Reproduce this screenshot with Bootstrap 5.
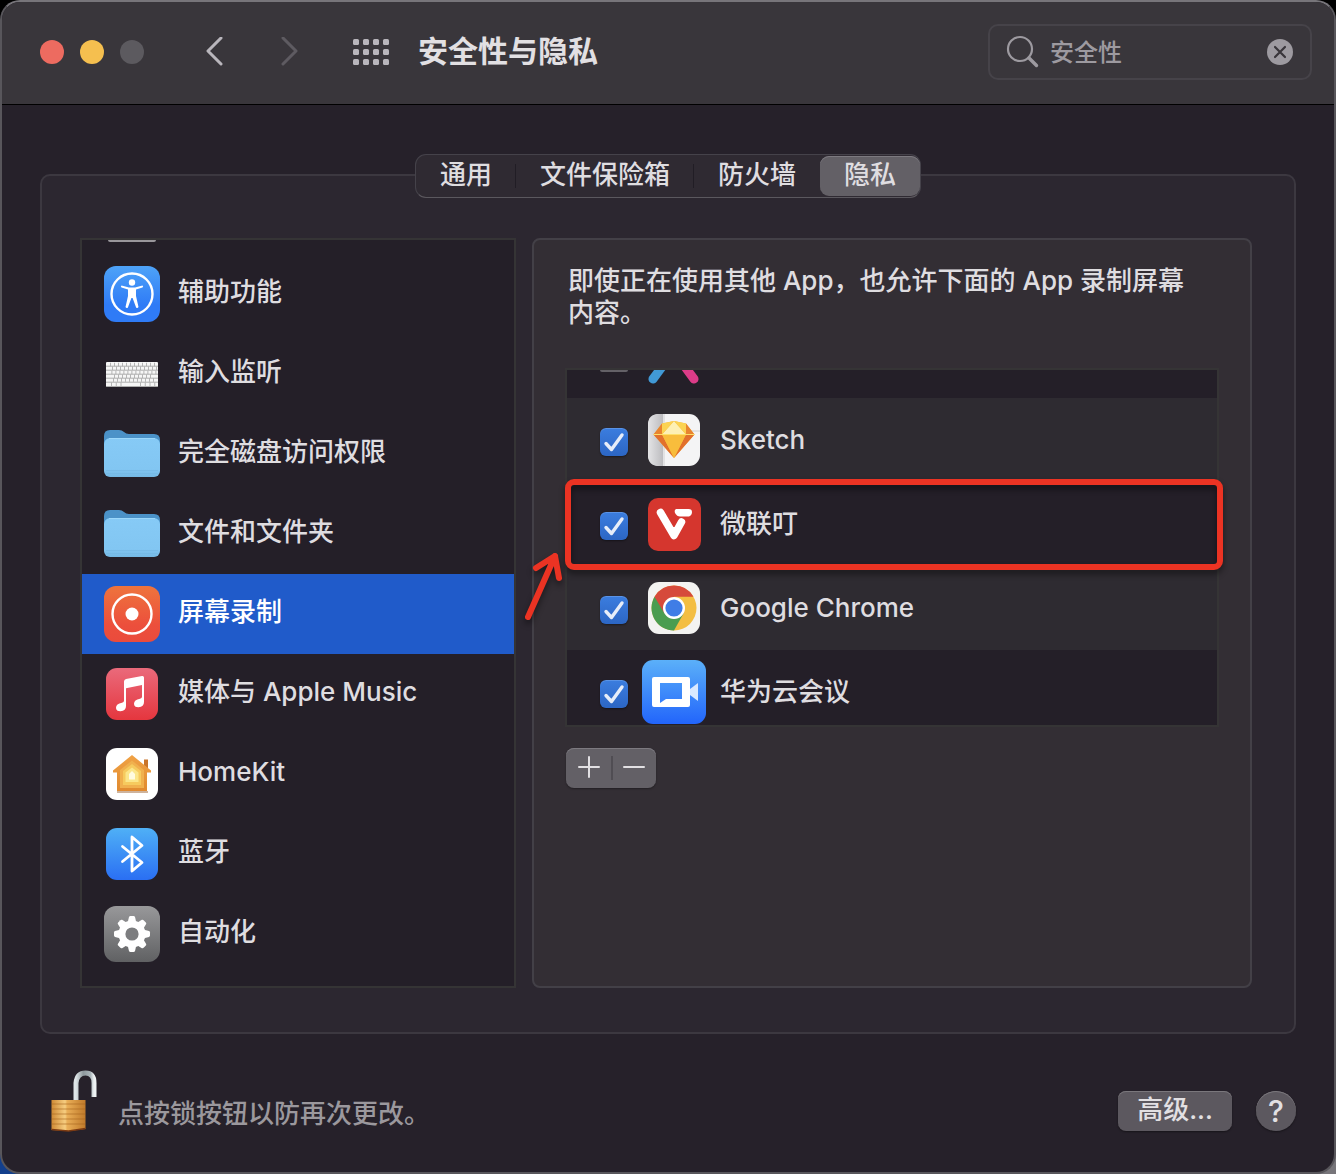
<!DOCTYPE html>
<html lang="zh-CN">
<head>
<meta charset="utf-8">
<meta name="viewport" content="width=device-width, initial-scale=1">
<title>安全性与隐私</title>
<link href="https://cdn.jsdelivr.net/npm/bootstrap@5.3.0/dist/css/bootstrap.min.css" rel="stylesheet">
<style>
  body {
    background: linear-gradient(90deg, #123f8c 0 40px, #000 40px 1290px, #77757a 1290px) bottom / 100% 30px no-repeat #000;
    font-family: Inter, "Noto Sans CJK SC", sans-serif;
    font-size: 26px;
    font-weight: 500;
    line-height: 32px;
    color: #dfdde0;
  }
  .prefs-window {
    min-height: 100vh;
    background: #26212a;
    border: 2px solid #58565b;
    border-top-color: #77757a;
    border-radius: 20px;
    overflow: hidden;
  }
  .title-bar { background: #39363b; border-bottom: 1px solid #000; padding: 22px 22px 24px 38px; }
  .light { width: 24px; height: 24px; border: 0; border-radius: 50%; padding: 0; }
  .light-close { background: #ed6b60; }
  .light-min { background: #f5bf4f; }
  .light-zoom { background: #5c5a5f; }
  .bare { background: none; border: 0; padding: 0; color: #b9b6bc; line-height: 1; display: flex; }
  .bare:disabled { color: #5e5b61; }
  .history { margin-left: 60px; gap: 53px; }
  .grid-btn { margin-left: 52px; }
  .win-title { font-size: 30px; line-height: 38px; font-weight: 700; margin: 0 0 2px 29px; color: #e2e0e3; }
  .search-box { width: 324px; height: 56px; border: 2px solid #464349; border-radius: 10px; padding: 0 17px 0 16px; gap: 10px; color: #9d9aa0; }
  .search-box input { min-width: 0; background: none; border: 0; outline: 0; color: inherit; font-size: 24px; font-weight: inherit; line-height: 32px; padding: 2px 0 0; }
  .search-box input::-webkit-search-cancel-button { display: none; }
  .content { padding: 49px 38px 40px; }
  .tab-strip { background: #2f2a32; border: 1px solid #45424a; border-bottom-color: #5b585e; border-radius: 11px; position: relative; z-index: 1; margin-bottom: -24px; }
  .tab-strip button { background: none; border: 0; color: inherit; font-weight: inherit; padding: 3px 24px 5px; margin: 1px 0; position: relative; }
  .tab-strip button.split::after { content: ""; position: absolute; right: 0; top: 8px; bottom: 8px; width: 1px; background: #211d25; }
  .tab-strip button.active { background: #636066; border-radius: 9px; box-shadow: inset 0 1px #7d7a80; }
  .tab-panel { background: #2c2730; border: 2px solid #3c3840; border-radius: 10px; padding: 62px 42px 44px 38px; gap: 16px; }
  .side-list { width: 436px; flex: none; background: #241f28; border: 2px solid #353435; padding-bottom: 12px; }
  .side-peek { height: 14px; padding-left: 26px; overflow: hidden; }
  .side-peek i { display: block; width: 48px; height: 2px; border-radius: 0 0 10px 10px; background: #99969b; }
  .side-item { display: flex; align-items: center; gap: 18px; height: 80px; padding-left: 22px; color: #dfdde0; text-decoration: none; }
  .side-item span { padding-bottom: 4px; }
  .side-item.current { background: #205bca; color: #fff; }
  .detail { background: #332e34; border: 2px solid #434047; border-radius: 8px; padding: 25px 31px 32px; }
  .detail-note { margin: 0 35px 39px 3px; }
  .app-wrap { position: relative; }
  .app-list { border: 2px solid #353435; overflow: hidden; background: #241f28; }
  .app-peek { height: 28px; padding-left: 33px; gap: 16px; overflow: hidden; }
  .app-peek i { width: 28px; height: 2px; border-radius: 0 0 8px 8px; background: #646167; }
  .app-row { display: flex; align-items: center; height: 84px; padding-left: 33px; gap: 14px; }
  .app-row.alt { background: #2e2b31; }
  .app-row svg { flex: none; }
  .app-row .form-check-input { width: 28px; height: 28px; margin: 4px 0 0; border-radius: 6px; border: 0; flex: none; }
  .app-row .form-check-input:checked {
    background: url("data:image/svg+xml,%3Csvg xmlns='http://www.w3.org/2000/svg' viewBox='0 0 28 28'%3E%3Cpath d='M6 15.500 11.500 21.500 22 7' fill='none' stroke='%23e6edf9' stroke-width='3.400' stroke-linecap='round' stroke-linejoin='round'/%3E%3C/svg%3E") center / 28px, linear-gradient(#3b7ddf, #2c66c4);
    box-shadow: inset 0 1px #5a93e6, 0 1px 2px #0006;
  }
  .app-row.last { height: 75px; padding-top: 8px; }
  .mark-box { position: absolute; left: 0; right: -4px; top: 111px; height: 91px; border: 6px solid #eb3323; border-radius: 9px; filter: drop-shadow(0 4px 3px #0007); pointer-events: none; }
  .mark-arrow { position: absolute; left: -45px; top: 180px; filter: drop-shadow(0 4px 3px #0007); pointer-events: none; }
  .add-remove { margin: 21px 0 0 1px; background: #636066; border-radius: 8px; box-shadow: inset 0 1px #7d7a80, 0 1px 2px #0005; }
  .add-remove button { background: none; border: 0; padding: 0 0 2px; width: 45px; height: 40px; color: #e2e0e3; line-height: 1; }
  .add-remove button + button { position: relative; }
  .add-remove button + button::before { content: ""; position: absolute; left: 0; top: 8px; width: 2px; height: 24px; background: #504d53; }
  .foot { padding: 34px 0 0 10px; }
  .foot-note { color: #9b989d; margin: 28px 0 0 20px; }
  .foot-actions { padding-top: 21px; }
  .push { background: #5c585f; color: #e2e0e3; border: 0; height: 40px; box-shadow: inset 0 1px #7a777c, 0 1px 2px #0006; padding: 0; font-weight: inherit; }
  .push-wide { width: 114px; border-radius: 8px; padding-bottom: 2px; }
  .push-round { width: 40px; border-radius: 50%; font-size: 30px; }
</style>
</head>
<body>
<svg width="0" height="0" class="position-absolute" aria-hidden="true">
  <defs>
    <linearGradient id="gBlue" x2="0" y2="1"><stop stop-color="#4ea3f8"/><stop offset=".7" stop-color="#2f7bf6"/><stop offset="1" stop-color="#2f7bf6"/></linearGradient>
    <linearGradient id="gBt" x2="0" y2="1"><stop stop-color="#4fb0f6"/><stop offset="1" stop-color="#2a6ff3"/></linearGradient>
    <linearGradient id="gRec" x2="0" y2="1"><stop stop-color="#ee743d"/><stop offset=".7" stop-color="#ec4f3c"/><stop offset="1" stop-color="#ea4b3c"/></linearGradient>
    <linearGradient id="gMusic" x2="0" y2="1"><stop stop-color="#ea6a7b"/><stop offset="1" stop-color="#e5363e"/></linearGradient>
    <linearGradient id="gGear" x2="0" y2="1"><stop stop-color="#98989a"/><stop offset="1" stop-color="#606163"/></linearGradient>
    <linearGradient id="gFold" x2="0" y2="1"><stop stop-color="#86caf6"/><stop offset=".8" stop-color="#82c6f2"/><stop offset="1" stop-color="#75b9e5"/></linearGradient>
    <linearGradient id="gVid" x2="0" y2="1"><stop stop-color="#5bb0f9"/><stop offset="1" stop-color="#2265fb"/></linearGradient>
    <linearGradient id="gHouse" x2="0" y2="1"><stop stop-color="#f0a245"/><stop offset="1" stop-color="#e08a30"/></linearGradient>
    <linearGradient id="gSk" x2="1" y2="0"><stop stop-color="#e4e4e6"/><stop offset="1" stop-color="#bcbcbf"/></linearGradient>
    <linearGradient id="gLock"><stop stop-color="#cf8a35"/><stop offset=".4" stop-color="#f6cd80"/><stop offset=".46" stop-color="#e9ae57"/><stop offset="1" stop-color="#c07a2a"/></linearGradient>
    <linearGradient id="gShackle"><stop stop-color="#dfe6e8"/><stop offset=".4" stop-color="#8d989c"/><stop offset=".8" stop-color="#a9b4b8"/><stop offset="1" stop-color="#eef2f3"/></linearGradient>
    <symbol id="folder" viewBox="0 0 56 56">
      <path d="M0 19V10q0-6 6-6h9q3 0 5 2t5 2h25q6 0 6 6v8H0z" fill="#4b92c8"/>
      <path d="M0 22v-4q0-6 6-6h44q6 0 6 6v4z" fill="#3f83ba"/>
      <rect y="12" width="56" height="39" rx="6" fill="url(#gFold)"/>
      <path d="M5 12.500h46" stroke="#9bd8fb"/><path d="M2 44.500h52M2 47.500h52" stroke="#74b8e4" stroke-width=".7"/>
    </symbol>
  </defs>
</svg>

<div class="prefs-window">
  <header class="title-bar d-flex align-items-center">
    <div class="d-flex gap-3">
      <button class="light light-close" aria-label="关闭"></button>
      <button class="light light-min" aria-label="最小化"></button>
      <button class="light light-zoom" aria-label="缩放"></button>
    </div>
    <div class="history d-flex">
      <button class="bare" aria-label="后退"><svg width="22" height="30" viewBox="0 0 22 30"><path d="M17 1 4 14l13 13" fill="none" stroke="currentColor" stroke-width="3" stroke-linecap="round" stroke-linejoin="round"/></svg></button>
      <button class="bare" aria-label="前进" disabled><svg width="22" height="30" viewBox="0 0 22 30"><path d="M4 1l13 13L4 27" fill="none" stroke="currentColor" stroke-width="3" stroke-linecap="round" stroke-linejoin="round"/></svg></button>
    </div>
    <button class="bare grid-btn" aria-label="显示全部"><svg width="36" height="26" viewBox="0 0 36 26" fill="currentColor"><g id="dots"><rect width="6" height="6" rx="1.500"/><rect x="10" width="6" height="6" rx="1.500"/><rect x="20" width="6" height="6" rx="1.500"/><rect x="30" width="6" height="6" rx="1.500"/></g><use href="#dots" y="10"/><use href="#dots" y="20"/></svg></button>
    <h1 class="win-title">安全性与隐私</h1>
    <div class="search-box d-flex align-items-center ms-auto">
      <svg class="flex-shrink-0" width="34" height="34" viewBox="0 0 34 34" fill="none" stroke="currentColor" stroke-linecap="round"><circle cx="14" cy="14" r="12" stroke-width="2.200"/><path d="M23 23l7.500 7.500" stroke-width="3.400"/></svg>
      <input class="flex-grow-1" type="search" value="安全性" aria-label="搜索">
      <button class="bare" aria-label="清除"><svg width="26" height="26" viewBox="0 0 26 26"><circle cx="13" cy="13" r="13" fill="#9d9aa0"/><path d="M8 8l10 10M18 8 8 18" stroke="#39363b" stroke-width="2.200" stroke-linecap="round"/></svg></button>
    </div>
  </header>

  <main class="content">
    <div class="d-flex justify-content-center">
      <div class="tab-strip d-flex" role="tablist">
        <button class="split" role="tab">通用</button>
        <button class="split" role="tab">文件保险箱</button>
        <button role="tab">防火墙</button>
        <button class="active" role="tab" aria-selected="true">隐私</button>
      </div>
    </div>

    <section class="tab-panel d-flex">
      <nav class="side-list">
        <div class="side-peek"><i></i></div>
        <a class="side-item" href="#"><svg width="56" height="56" viewBox="0 0 56 56"><rect width="56" height="56" rx="12" fill="url(#gBlue)"/><circle cx="28" cy="28" r="20.500" fill="none" stroke="#fff" stroke-width="2.400"/><circle cx="28" cy="16.500" r="3.200" fill="#fff"/><path d="M17.500 19.500 25 21.500h6l7.500-2q1.300.8 0 2L32 23.500V30l2.500 11q-1 1.800-2.400.5L28.600 32h-1.200l-3.500 9.500q-1.400 1.300-2.400-.5L24 30v-6.500l-6.500-2q-1.300-1.200 0-2z" fill="#fff"/></svg><span>辅助功能</span></a>
        <a class="side-item" href="#"><svg width="56" height="56" viewBox="0 0 56 56"><rect x="2" y="16" width="52" height="25" rx="1" fill="#f6f6f6"/><path d="M2 20.200h52M2 24.200h52M2 28.200h52M2 32.200h52M2 36.200h52M2 40.500h52" stroke="#a5a5a5" stroke-width=".9"/><path d="M3 18.500h50M4.500 26.500h48M6 34h46M5 22.300h48M7 30.300h42" stroke="#a5a5a5" stroke-width="3.500" stroke-dasharray=".8 3.200" stroke-dashoffset="-3"/><path d="M7 38.300h12M36 38.300h17" stroke="#a5a5a5" stroke-width="3.500" stroke-dasharray=".8 4"/></svg><span>输入监听</span></a>
        <a class="side-item" href="#"><svg width="56" height="56"><use href="#folder"/></svg><span>完全磁盘访问权限</span></a>
        <a class="side-item" href="#"><svg width="56" height="56"><use href="#folder"/></svg><span>文件和文件夹</span></a>
        <a class="side-item current" href="#" aria-current="page"><svg width="56" height="56" viewBox="0 0 56 56"><rect width="56" height="56" rx="12" fill="url(#gRec)"/><circle cx="28" cy="28" r="19.500" fill="none" stroke="#fff" stroke-width="2.400"/><circle cx="28" cy="28" r="6.500" fill="#fff"/></svg><span>屏幕录制</span></a>
        <a class="side-item" href="#"><svg width="56" height="56" viewBox="0 0 56 56"><rect x="2" y="2" width="52" height="52" rx="11" fill="url(#gMusic)"/><path d="M20 15.500q0-2 2-2.500l16-3q2-.3 2 1.600V36q0 5-5.500 5.300-4.500 0-4.500-3.500 0-4 6-5 2-.4 2-2V19L22 22.200V40q0 5-5.500 5.300-4.500 0-4.500-3.500 0-4 6-5 2-.4 2-2z" fill="#fff"/></svg><span>媒体与 Apple Music</span></a>
        <a class="side-item" href="#"><svg width="56" height="56" viewBox="0 0 56 56"><rect x="2" y="2" width="52" height="52" rx="11" fill="#fff"/><path d="M40 13.500h4V24l-4-4z" fill="#c9742a"/><path d="M13 46h31" stroke="#9e6a3c" opacity=".5" stroke-width="2"/><path d="M28 9 47 24.500v2h-4V45H13V26.500H9v-2z" fill="url(#gHouse)"/><path d="M28 14.500 40 24v18H16V24z" fill="#f0b04e"/><path d="M28 18l9 7v14H19V25z" fill="#f6ca5e"/><path d="M28 21.500l6.500 5V36h-13v-9.500z" fill="#fbe68a"/><path d="M28 25l3 3v5.500h-6V28z" fill="#fffbe0"/></svg><span>HomeKit</span></a>
        <a class="side-item" href="#"><svg width="56" height="56" viewBox="0 0 56 56"><rect x="2" y="2" width="52" height="52" rx="11" fill="url(#gBt)"/><path d="M18.500 20.500 38 36.500 28 45V11l10 8.500L18.500 35.500" fill="none" stroke="#fff" stroke-width="2.800" stroke-linecap="round" stroke-linejoin="round"/></svg><span>蓝牙</span></a>
        <a class="side-item" href="#"><svg width="56" height="56" viewBox="0 0 56 56"><rect width="56" height="56" rx="12" fill="url(#gGear)"/><g fill="#fff"><g id="cog"><path id="tooth" d="M23.800 16 25 11q.4-1 1.400-1h3.200q1 0 1.400 1l1.200 5v24L31 45q-.4 1-1.400 1h-3.200q-1 0-1.400-1l-1.200-5z"/><use href="#tooth" transform="rotate(90 28 28)"/></g><use href="#cog" transform="rotate(45 28 28)"/><circle cx="28" cy="28" r="13.500"/></g><circle cx="28" cy="28" r="6.600" fill="#7c7d7f"/></svg><span>自动化</span></a>
      </nav>

      <section class="detail flex-grow-1">
        <p class="detail-note">即使正在使用其他 App，也允许下面的 App 录制屏幕内容。</p>
        <div class="app-wrap">
          <div class="app-list">
            <div class="app-peek d-flex"><i></i><svg width="60" height="28" viewBox="0 0 60 28"><path d="M23-10 9 9" stroke="#4199d6" stroke-width="9" stroke-linecap="round"/><path d="M36-10 50 9" stroke="#dc3c88" stroke-width="9" stroke-linecap="round"/></svg></div>
            <div class="app-row alt">
              <input class="form-check-input" type="checkbox" id="a1" checked>
              <svg width="64" height="64" viewBox="0 0 64 64"><rect x="6" y="6" width="52" height="52" rx="11" fill="#f4f4f5"/><path d="M17 6h4v52h-4Q6 58 6 47V17Q6 6 17 6z" fill="url(#gSk)"/><path d="M22 6v52M48 23h10" stroke="#d0d0d2"/><path d="M20 15.500 32 13l12 2.500 8.500 11L32 50 11.500 26.500z" fill="#f6b23a"/><path d="M20 15.500 11.500 26.500H20zM44 15.500l8.500 11H44z" fill="#e8842f"/><path d="M11.500 26.500H20L32 50zM52.500 26.500H44L32 50z" fill="#e2702c"/><path d="M20 26.500h24L32 50z" fill="#f8bd3c"/><path d="M32 13 20 26.500h24z" fill="#fdf0b4"/><path d="M32 13 20 15.500v11zM32 13l12 2.500v11z" fill="#fbd352"/><path d="M11.500 26.500h41" stroke="#fde06a" stroke-width="1"/></svg>
              <label for="a1">Sketch</label>
            </div>
            <div class="app-row">
              <input class="form-check-input" type="checkbox" id="a2" checked>
              <svg width="64" height="64" viewBox="0 0 64 64"><rect x="6" y="6" width="53" height="53" rx="10" fill="#d5362e"/><path d="M18.500 20.500 32 43.500l7.500-13.500" fill="none" stroke="#fff" stroke-width="7.500" stroke-linecap="round" stroke-linejoin="round"/><path d="M32 35v10" stroke="#fff" stroke-width="4"/><path d="M34 17h12.500q3.500 0 3.500 3t-3 4.500H38q-3 0-5-3.500-1-3 1-4z" fill="#fff"/></svg>
              <label for="a2">微联叮</label>
            </div>
            <div class="app-row alt">
              <input class="form-check-input" type="checkbox" id="a3" checked>
              <svg width="64" height="64" viewBox="0 0 64 64"><rect x="6" y="6" width="52" height="52" rx="11" fill="#f3f3f1"/><circle cx="32" cy="32" r="22.500" fill="#f3be42"/><path d="M32 32 12.500 20.800A22.500 22.500 0 0 0 32 54.500L41.500 37.500z" fill="#4a9d50"/><path d="M12.500 20.800A22.500 22.500 0 0 1 51.500 20.800H32L22.500 37.500z" fill="#d64a3b"/><circle cx="32" cy="32" r="11" fill="#fff"/><circle cx="32" cy="32" r="8.600" fill="#3f7de6"/></svg>
              <label for="a3">Google Chrome</label>
            </div>
            <div class="app-row last">
              <input class="form-check-input" type="checkbox" id="a4" checked>
              <svg width="64" height="64" viewBox="0 0 64 64"><rect width="64" height="64" rx="11" fill="url(#gVid)"/><path d="M12 17h34q2 0 2 2v26q0 2-2 2H12q-2 0-2-2V19q0-2 2-2zM18 23v20l6-4h16V23z" fill="#fff" fill-rule="evenodd"/><path d="M48 29l8-6v18l-8-6z" fill="#d9e9ff"/></svg>
              <label for="a4">华为云会议</label>
            </div>
          </div>
          <div class="mark-box"></div>
          <svg class="mark-arrow" width="50" height="80" viewBox="0 0 50 80" fill="none" stroke="#eb3323" stroke-width="6" stroke-linecap="round" stroke-linejoin="round"><path d="M8 69 35 8M16 20 35 8l4 22"/></svg>
        </div>
        <div class="add-remove d-inline-flex">
          <button aria-label="添加"><svg class="d-block mx-auto" width="22" height="22" viewBox="0 0 22 22"><path d="M1 11h20M11 1v20" stroke="currentColor" stroke-width="2" stroke-linecap="round"/></svg></button>
          <button aria-label="移除"><svg class="d-block mx-auto" width="22" height="22" viewBox="0 0 22 22"><path d="M1 11h20" stroke="currentColor" stroke-width="2" stroke-linecap="round"/></svg></button>
        </div>
      </section>
    </section>

    <footer class="foot d-flex align-items-center">
      <svg width="48" height="64" viewBox="0 0 48 64"><path d="M26 32V15q1-10 9.500-10T44 15v14" fill="none" stroke="url(#gShackle)" stroke-width="5"/><path d="M1.500 32h34v29l-17 2-17-1z" fill="url(#gLock)"/><path d="M2 36h33M2 41h33M2 46h33M2 51h33M2 56h33" stroke="#a5651f" opacity=".6" stroke-width="1.200"/><path d="M1.500 61.500 18.500 63l17-2.500" fill="none" stroke="#7b3a12" stroke-width="1.500"/></svg>
      <p class="foot-note">点按锁按钮以防再次更改。</p>
      <div class="foot-actions ms-auto d-flex align-items-center gap-4">
        <button class="push push-wide">高级...</button>
        <button class="push push-round" aria-label="帮助">?</button>
      </div>
    </footer>
  </main>
</div>
<script src="https://cdn.jsdelivr.net/npm/bootstrap@5.3.0/dist/js/bootstrap.bundle.min.js"></script>
</body>
</html>
